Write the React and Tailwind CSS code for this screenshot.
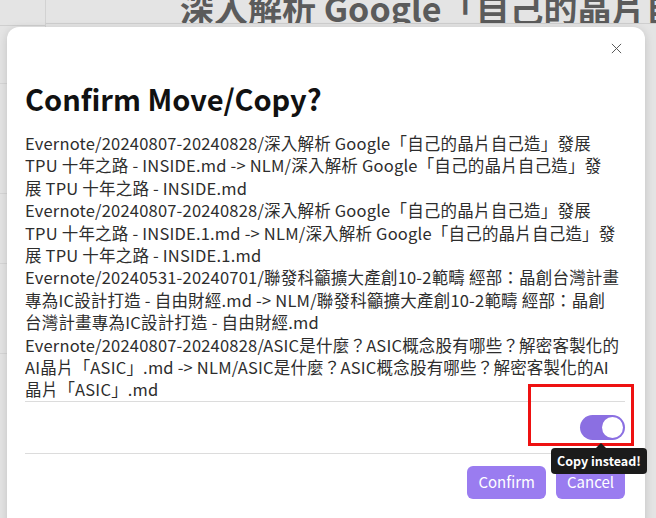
import React from 'react';

// each move shown as the lines it wraps to in the dialog
const items = [
    [
        'Evernote/20240807-20240828/深入解析 Google「自己的晶片自己造」發展',
        'TPU 十年之路 - INSIDE.md -> NLM/深入解析 Google「自己的晶片自己造」發',
        '展 TPU 十年之路 - INSIDE.md',
    ],
    [
        'Evernote/20240807-20240828/深入解析 Google「自己的晶片自己造」發展',
        'TPU 十年之路 - INSIDE.1.md -> NLM/深入解析 Google「自己的晶片自己造」發',
        '展 TPU 十年之路 - INSIDE.1.md',
    ],
    [
        'Evernote/20240531-20240701/聯發科籲擴大產創10-2範疇 經部：晶創台灣計畫',
        '專為IC設計打造 - 自由財經.md -> NLM/聯發科籲擴大產創10-2範疇 經部：晶創',
        '台灣計畫專為IC設計打造 - 自由財經.md',
    ],
    [
        'Evernote/20240807-20240828/ASIC是什麼？ASIC概念股有哪些？解密客製化的',
        'AI晶片「ASIC」.md -> NLM/ASIC是什麼？ASIC概念股有哪些？解密客製化的AI',
        '晶片「ASIC」.md',
    ],
];

const App = () => {
    return (
        <div className="relative w-[656px] h-[518px] overflow-hidden bg-[#e4e4e4] font-['Noto_Sans_CJK_TC','Noto_Sans',sans-serif]">
            {/* dimmed page behind the modal */}
            <div className="flex h-full">
                <div className="w-[46px] shrink-0 border-r border-[#d2d2d2] flex flex-col">
                    <div className="h-[26px] border-b border-[#cfcfcf]" />
                    <div className="h-[58px] border-b border-[#d6d6d6]" />
                    <div className="h-[110px] border-b border-[#d6d6d6]" />
                    <div className="h-[70px] border-b border-[#d6d6d6]" />
                    <div className="h-[90px] border-b border-[#d6d6d6]" />
                </div>
                <div className="flex-1 flex flex-col">
                    <div className="h-[26px] border-b border-[#cfcfcf] overflow-hidden">
                        <div className="-mt-[12px] ml-[134px] whitespace-nowrap text-[34px] font-semibold text-[#5b5b5b] leading-[40px]">
                            深入解析 Google「自己的晶片自己造」
                        </div>
                    </div>
                    <div className="flex-1 flex justify-end">
                        <div className="w-[12px] overflow-hidden text-[16px] text-[#666] leading-[22px] whitespace-nowrap">
                            <div className="mt-[208px] text-[#7a7a7a]">|—</div>
                            <div className="mt-[66px] text-[#8b6fe2] underline">s:</div>
                            <div className="text-[#8b6fe2] underline">57</div>
                            <div className="-mt-[10px]">g</div>
                            <div className="mt-[120px] font-bold text-[#333]">L</div>
                        </div>
                    </div>
                </div>
            </div>

            {/* modal */}
            <div className="absolute left-[7px] top-[27px] w-[638px] h-[520px] bg-white rounded-[12px] shadow-[0_2px_10px_rgba(0,0,0,0.15)] pt-[54px] pl-[18px] pr-[20px]">
                <button className="absolute right-[17px] top-[9px] w-[24px] h-[24px] flex items-center justify-center text-[#555]">
                    <svg width="13" height="13" viewBox="0 0 24 24" fill="none" stroke="currentColor" strokeWidth="1.8" strokeLinecap="round">
                        <path d="M4 4l16 16M20 4L4 20" />
                    </svg>
                </button>
                <h1 className="text-[29px] font-bold text-[#111] leading-[34px] mb-[17px]">Confirm Move/Copy?</h1>
                <div className="text-[16.5px] tracking-[0.2px] leading-[22.4px] text-[#2d2d2d] border-b border-[#dcdcdc] whitespace-nowrap">
                    {items.map((lines, i) => (
                        <div key={i}>
                            {lines.map((l) => (
                                <div key={l}>{l}</div>
                            ))}
                        </div>
                    ))}
                </div>
                <div className="h-[52px] border-b border-[#dcdcdc] flex items-center justify-end">
                    <div className="w-[45px] h-[25px] rounded-full bg-[#8b6fe2] p-[2px] flex justify-end">
                        <div className="w-[21px] h-[21px] rounded-full bg-white" />
                    </div>
                </div>
                <div className="mt-[12px] flex justify-end gap-[10px]">
                    <button className="h-[33px] px-[11px] rounded-[6px] bg-[#9a7cf0] text-white text-[15px]">Confirm</button>
                    <button className="h-[33px] px-[11px] rounded-[6px] bg-[#9a7cf0] text-white text-[15px]">Cancel</button>
                </div>
            </div>

            {/* annotation box */}
            <div className="absolute left-[528px] top-[384px] w-[106px] h-[62px] border-[3px] border-[#ee1111]" />

            {/* tooltip */}
            <div className="absolute left-[551px] top-[448px] h-[26px] px-[6px] rounded-[4px] bg-[#1b1b1b] text-white text-[12.5px] font-bold flex items-center">
                <div className="absolute left-[45px] -top-[5px] w-0 h-0 border-l-[5px] border-r-[5px] border-b-[5px] border-l-transparent border-r-transparent border-b-[#1b1b1b]" />
                Copy instead!
            </div>
        </div>
    );
};

export default App;
